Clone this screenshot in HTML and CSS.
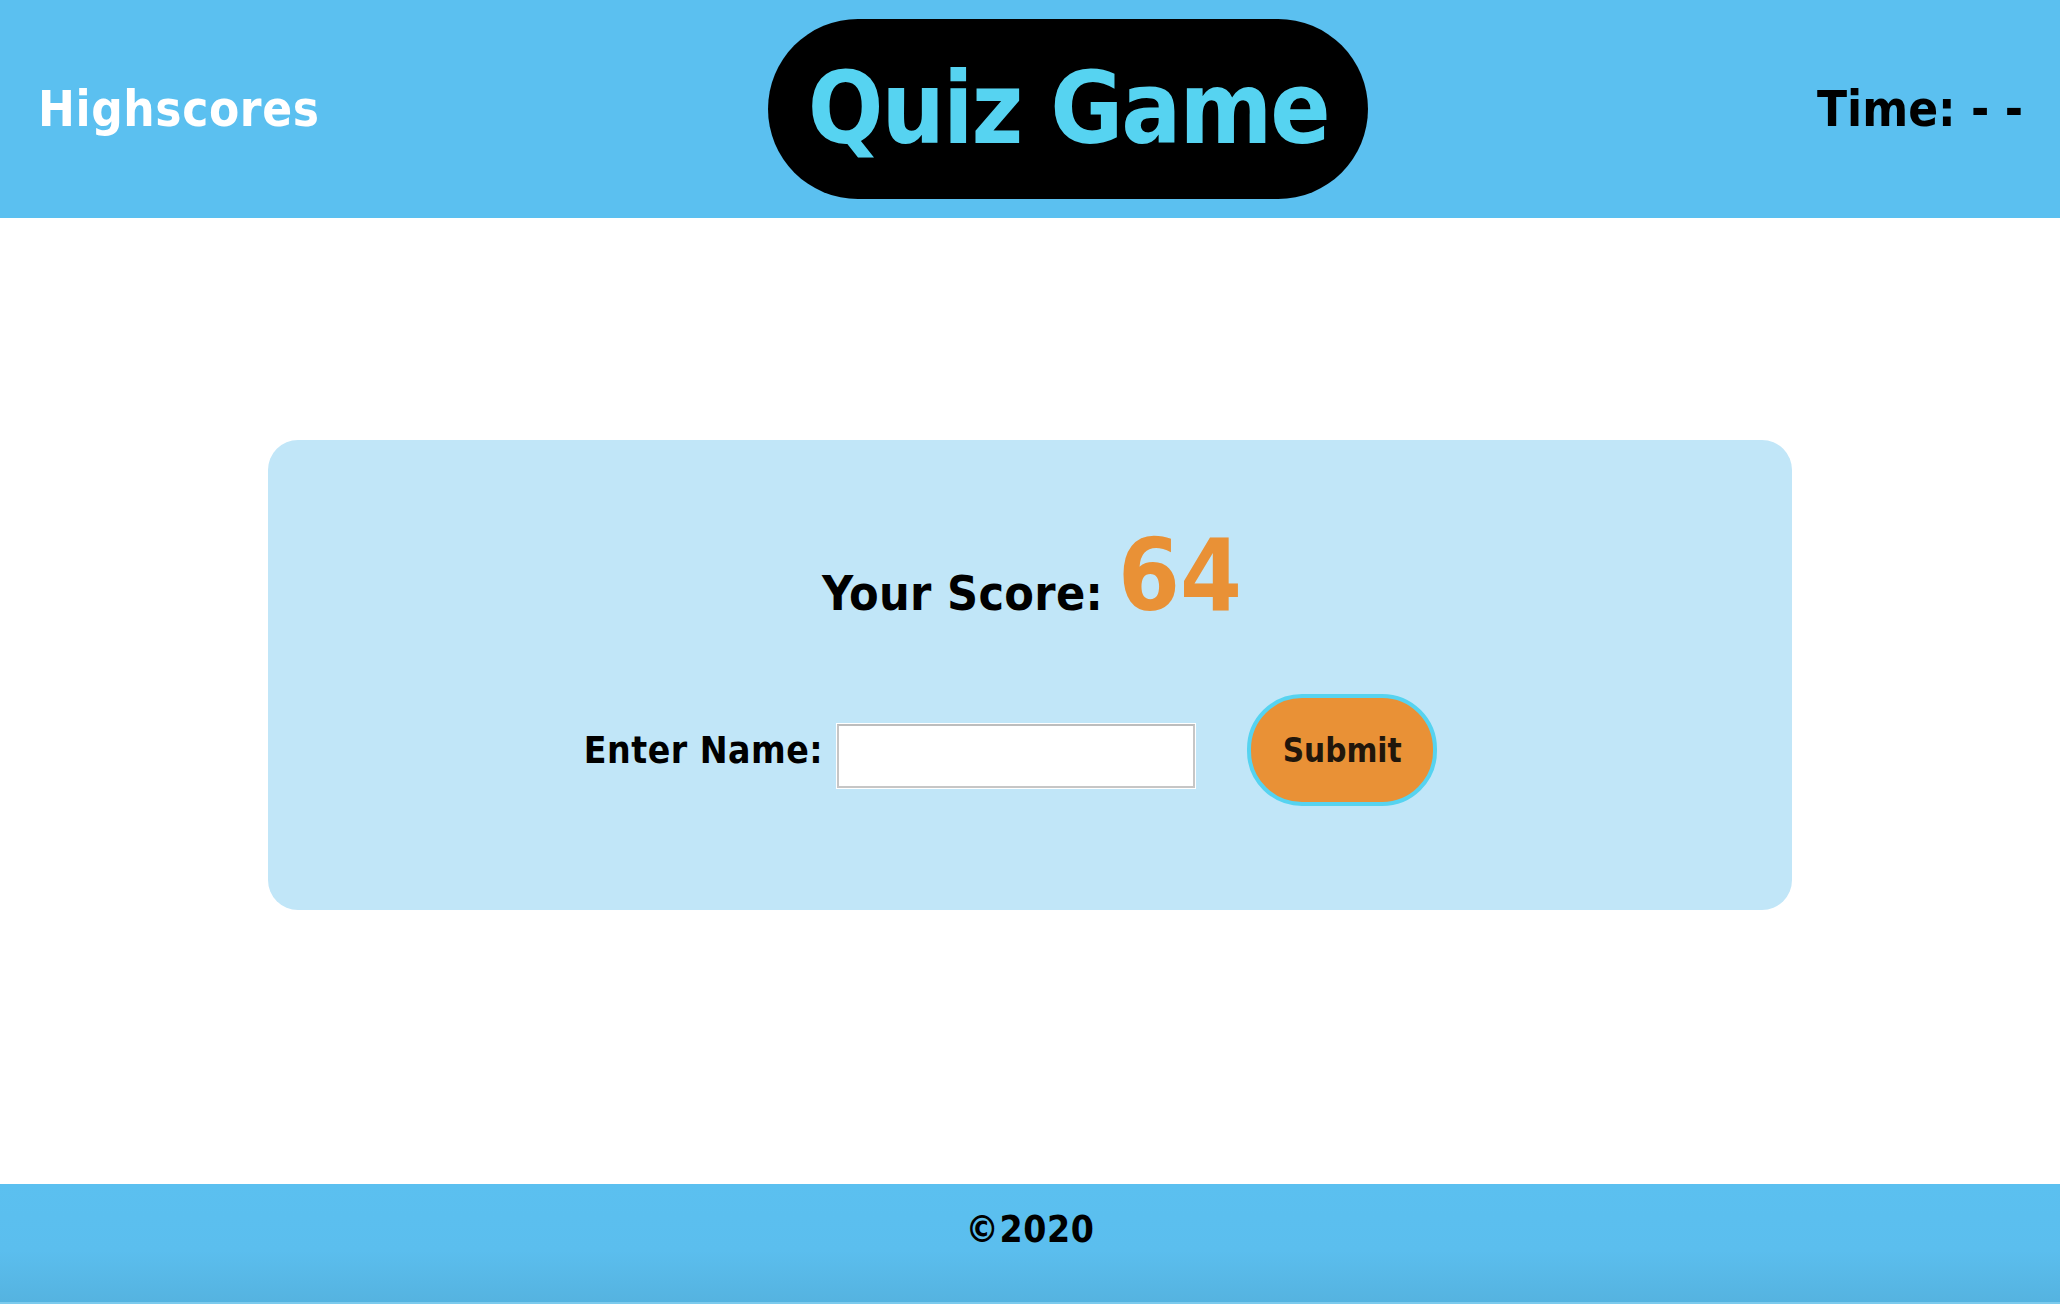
FILE: index.html
```html
<!DOCTYPE html>
<html lang="en">
<head>
<meta charset="utf-8">
<title>Quiz Game</title>
<link rel="stylesheet" href="styles.css">
</head>
<body>
<div class="page">
  <header class="topbar">
    <a class="nav-link" href="#">Highscores</a>
    <h1 class="title">Quiz Game</h1>
    <div class="timer">Time: - -</div>
  </header>
  <main class="main">
    <section class="card">
      <div class="score-row">
        <span class="score-label">Your Score:</span>
        <span class="score-value">64</span>
      </div>
      <form class="name-form">
        <label class="name-label" for="name">Enter Name:</label>
        <input class="name-input" id="name" type="text">
        <button class="submit-btn" type="button">Submit</button>
      </form>
    </section>
  </main>
  <footer class="footer">
    <span class="copy">©2020</span>
  </footer>
</div>
</body>
</html>
```
FILE: styles.css
```css
html, body {
  margin: 0;
  padding: 0;
}
body {
  font-family: "DejaVu Sans Condensed", "DejaVu Sans", Verdana, sans-serif;
  font-stretch: condensed;
  font-weight: bold;
  background: #ffffff;
  color: #000;
}
.page {
  display: flex;
  flex-direction: column;
  height: 1304px;
}
.topbar {
  height: 218px;
  flex: 0 0 218px;
  background: #5bc0f0;
  display: flex;
  align-items: center;
  justify-content: space-between;
  padding: 0 37px 0 38px;
  box-sizing: border-box;
}
.nav-link {
  color: #ffffff;
  text-decoration: none;
  font-size: 49px;
  line-height: 1;
  letter-spacing: 0.6px;
}
.title {
  margin: 0;
  width: 600px;
  height: 180px;
  border-radius: 90px;
  background: #000;
  color: #56d3f1;
  font-size: 99px;
  line-height: 180px;
  text-align: center;
  font-weight: bold;
  letter-spacing: -2px;
}
.timer {
  font-size: 49px;
  line-height: 1;
  color: #000;
}
.main {
  flex: 1 1 auto;
  padding-top: 222px;
  box-sizing: border-box;
}
.card {
  width: 1524px;
  margin: 0 auto;
  background: #c1e6f8;
  border-radius: 30px;
  padding: 86px 0 104px;
  box-sizing: border-box;
  display: flex;
  flex-direction: column;
  align-items: center;
}
.score-row {
  display: flex;
  align-items: baseline;
  gap: 15px;
  line-height: 1;
  padding-left: 4px;
}
.score-label {
  font-size: 48px;
  letter-spacing: 0.3px;
}
.score-value {
  font-size: 99px;
  color: #e99136;
}
.name-form {
  margin: 69px 0 0;
  display: flex;
  align-items: center;
  padding-right: 39px;
}
.name-label {
  font-size: 37px;
  line-height: 1;
  margin-right: 14px;
  letter-spacing: 0.5px;
}
.name-input {
  align-self: flex-start;
  margin: 30px 52px 0 0;
  width: 358px;
  height: 64px;
  box-sizing: border-box;
  background: #fff;
  border: 2px solid #c6c6c6;
  border-top-color: #bdbdbd;
  box-shadow: 0 0 0 1px #ffffff;
  padding: 0 8px;
  font-size: 24px;
}
.submit-btn {
  width: 190px;
  height: 112px;
  box-sizing: border-box;
  border: 4px solid #56d3f0;
  border-radius: 55px;
  background: #e99136;
  color: #21160b;
  font-family: inherit;
  font-stretch: condensed;
  font-weight: bold;
  font-size: 33px;
  line-height: 1;
  padding: 0;
}
.footer {
  flex: 0 0 120px;
  height: 120px;
  background: linear-gradient(to bottom, #5bc0f0 0%, #5bbeee 55%, #55b3e0 98%, #7ccbee 98%, #7ccbee 100%);
  display: flex;
  justify-content: center;
  align-items: flex-start;
  padding-top: 27px;
  box-sizing: border-box;
}
.copy {
  font-size: 37px;
  line-height: 1;
  letter-spacing: 0.6px;
}
```
